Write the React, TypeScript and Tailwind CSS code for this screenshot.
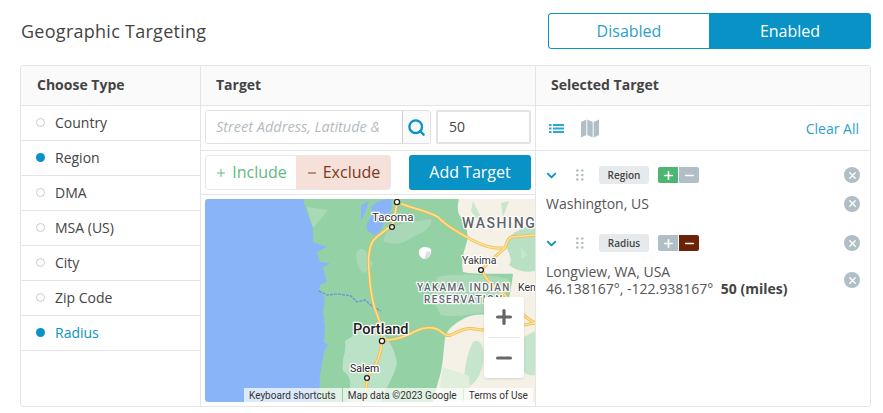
import React from 'react';
import { ChevronDown, Minus, Plus, Search, X } from 'lucide-react';

const TYPES = ['Country', 'Region', 'DMA', 'MSA (US)', 'City', 'Zip Code', 'Radius'];

const I5 = 'M193 0 L188 24 C182 32 172 36 168 42 C163 50 163 60 164 72 C165 88 166 98 170 110 C174 120 177 128 177 143 C176 154 172 166 164 176 C161 182 162 190 158 203';
const I90 = 'M197 5 C210 10 222 12 233 18 C240 26 248 30 258 36 C268 42 280 48 290 49 L300 49 C302 44 302 40 306 38 L330 36';
const I82 = 'M300 49 C290 58 282 64 277 71 C280 82 292 88 300 96 C308 106 318 118 330 124';
const I84 = 'M177 141 C190 142 204 136 213 131 C220 128 226 128 232 130 C238 133 240 138 246 136 C254 132 262 128 270 130 C282 133 306 128 330 124';

const RemoveButton = () => (
  <span className="flex h-4 w-4 items-center justify-center rounded-full bg-[#b0bec5] text-white">
    <X size={11} strokeWidth={3} />
  </span>
);

const GripDots = () => (
  <svg width="8" height="12" viewBox="0 0 8 12" fill="#b0bec5" className="ml-[17px]">
    <circle cx="1.3" cy="1.5" r="1.3" />
    <circle cx="6.3" cy="1.5" r="1.3" />
    <circle cx="1.3" cy="6" r="1.3" />
    <circle cx="6.3" cy="6" r="1.3" />
    <circle cx="1.3" cy="10.5" r="1.3" />
    <circle cx="6.3" cy="10.5" r="1.3" />
  </svg>
);

const TargetHead = ({ label, mode }: { label: string; mode: 'include' | 'exclude' }) => (
  <div className="flex h-[18px] items-center">
    <ChevronDown size={15} strokeWidth={3} className="-ml-[2px] text-[#0a93c5]" />
    <GripDots />
    <span className="ml-[15px] flex h-[18px] w-[50px] items-center justify-center rounded-[3px] bg-[#e7eaed] text-[10px] font-semibold text-[#444]">
      {label}
    </span>
    <div className="ml-[9px] flex h-4 gap-px">
      <span className={`flex w-5 items-center justify-center rounded-l-[2px] text-white ${mode === 'include' ? 'bg-[#4cb572]' : 'bg-[#b0bec5]'}`}>
        <Plus size={13} strokeWidth={3} />
      </span>
      <span className={`flex w-5 items-center justify-center rounded-r-[2px] text-white ${mode === 'exclude' ? 'bg-[#6b2206]' : 'bg-[#b0bec5]'}`}>
        <Minus size={13} strokeWidth={3} />
      </span>
    </div>
    <div className="ml-auto">
      <RemoveButton />
    </div>
  </div>
);

const MapArt = () => (
  <svg viewBox="0 0 330 203" className="block h-full w-full" preserveAspectRatio="none" fontFamily="Roboto, sans-serif">
    <rect width="330" height="203" fill="#8ab4f8" />
    {/* land */}
    <path d="M98 0 L102 13 L108 29 L108 43 L122 48 L112 53 L115 63 L125 64 L118 69 L122 83 L115 86 L114 91 L120 99 L118 113 L120 129 L119 143 L123 146 L119 153 L115 176 L114 203 L330 203 L330 0 Z" fill="#94d2a5" />
    <path d="M102 8 L123 11 L108 29 Z" fill="#a8dab5" />
    {/* eastern dry side */}
    <path d="M254 0 C252 8 252 14 257 20 C262 28 264 36 261 46 C258 54 256 64 258 73 C272 76 296 74 308 75 C306 90 304 104 298 114 C284 116 268 114 260 119 C250 124 242 130 240 139 C238 155 238 170 233 183 L228 203 L330 203 L330 0 Z" fill="#f5f1e6" />
    <path d="M302 40 C312 30 322 28 330 24 L330 72 C320 74 312 72 304 66 C310 58 298 50 302 40 Z" fill="#b9e0c3" />
    <path d="M268 2 C272 10 274 16 280 22 C276 24 270 18 266 12 Z M296 4 L304 2 L298 18 Z M316 48 L322 56 L316 60 Z" fill="#c8e6cd" />
    <path d="M268 143 C276 138 280 150 278 164 C276 176 270 186 262 188 C256 180 262 154 268 143 Z M308 146 C318 138 330 132 330 132 L330 176 C322 178 312 172 308 146 Z" fill="#c5e6cc" />
    <path d="M238 168 L264 177 L266 200 L236 203 C234 192 236 180 238 168 Z" fill="#e0efdc" />
    {/* reservation and valleys */}
    <path d="M232 78 C250 74 288 76 304 80 C302 96 298 110 290 114 C272 112 250 120 236 116 C228 106 230 90 232 78 Z" fill="#abd9b8" />
    <path d="M140 142 C150 136 160 128 172 128 C182 136 190 150 192 164 C190 176 180 190 176 203 L142 203 C144 190 150 180 138 172 C136 160 142 152 140 142 Z" fill="#bbe2c6" />
    <path d="M186 28 C198 24 214 22 226 20 C228 28 218 34 204 40 C196 46 186 46 178 42 C180 36 182 32 186 28 Z" fill="#a9d8b6" />
    <path d="M152 52 C160 46 162 54 164 62 C172 60 166 72 158 74 C152 68 150 60 152 52 Z" fill="#a9d8b6" />
    {/* puget sound */}
    <path d="M156 6 L164 2 L160 14 L156 22 Z M166 8 C172 2 178 0 186 0 C188 8 186 14 180 20 C178 26 176 34 170 36 C164 34 160 30 162 24 C166 20 168 14 166 8 Z" fill="#8ab4f8" />
    <path d="M214 52 C215 47 222 47 226 50 C227 55 224 60 219 60 C216 59 213 56 214 52 Z" fill="#ffffff" />
    <path d="M222 52 L226 54 L223 59 L219 60 Z" fill="#dedede" />
    {/* columbia river */}
    <path d="M114 92 L122 96 L134 95 L146 97 L152 103 L160 101 L167 107 L176 112" fill="none" stroke="#6d94dc" strokeWidth="1.4" strokeDasharray="3 1" />
    <g fill="none" strokeLinejoin="round" strokeLinecap="round">
      <g stroke="#f2b94f" strokeWidth="3">
        <path d={I5} />
        <path d={I90} />
        <path d={I82} />
        <path d={I84} />
      </g>
      <g stroke="#fde293" strokeWidth="1.5">
        <path d={I5} />
        <path d={I90} />
        <path d={I82} />
        <path d={I84} />
      </g>
    </g>
    <g fill="#fff" stroke="#222" strokeWidth="1.3">
      <circle cx="192" cy="3" r="2.6" />
      <circle cx="187" cy="28" r="2.4" />
      <circle cx="276" cy="71" r="2.4" />
      <circle cx="177" cy="142" r="2.6" />
      <circle cx="162" cy="179" r="2.4" />
    </g>
    <g stroke="#fff" strokeWidth="2.5" paintOrder="stroke" strokeLinejoin="round">
      <text x="167" y="22" fontSize="11.5" fill="#333">Tacoma</text>
      <text x="257" y="29" fontSize="14" letterSpacing="1.6" fill="#5f6368" fontWeight="500">WASHING</text>
      <text x="257" y="65" fontSize="10.5" fill="#333">Yakima</text>
      <text x="212" y="91.5" fontSize="10" letterSpacing="1.35" fill="#5f6368" fontWeight="500">YAKAMA INDIAN</text>
      <text x="219" y="103.5" fontSize="10" letterSpacing="1.35" fill="#5f6368" fontWeight="500">RESERVATION</text>
      <text x="313" y="92" fontSize="10.5" fill="#333">Ken</text>
      <text x="148" y="135" fontSize="14.5" fill="#222" fontWeight="500">Portland</text>
      <text x="145" y="173" fontSize="10.5" fill="#222">Salem</text>
    </g>
  </svg>
);

const App: React.FC = () => {
  return (
    <div className="h-[413px] w-[883px] overflow-hidden bg-white font-['Open_Sans',sans-serif] text-[#444]">
      {/* Title row */}
      <div className="flex h-[65px] items-start pl-[21px] pr-3 pt-[13px]">
        <h1 className="mt-[6px] text-[18px] font-medium leading-6 tracking-[0.27px] text-[#444]">Geographic Targeting</h1>
        <div className="ml-auto flex h-9 w-[323px] overflow-hidden rounded-[3px] text-[16px]">
          <button className="flex-1 rounded-l-[3px] border border-r-0 border-[#0a93c5] bg-white text-[#2a9fcb]">Disabled</button>
          <button className="w-[162px] bg-[#0892c5] text-white">Enabled</button>
        </div>
      </div>

      {/* Main panel */}
      <div className="mx-5 flex h-[342px] w-[851px] overflow-hidden rounded-[3px] border border-[#e5e5e5]">
        {/* Choose type */}
        <div className="w-[180px] shrink-0 border-r border-[#e5e5e5]">
          <div className="flex h-10 items-center border-b border-[#e5e5e5] bg-[#fafafa] pb-[2px] pl-4 text-[14px] font-bold text-[#444]">Choose Type</div>
          {TYPES.map((t, i) => {
            const active = t === 'Region' || t === 'Radius';
            return (
              <div key={t} className="flex h-[35px] items-center border-b border-[#e5e5e5] pb-[2px] pl-[15px] text-[14px]">
                <span className={`h-[9px] w-[9px] rounded-full ${active ? 'bg-[#0892c5]' : 'border border-[#ccc] bg-white'}`} />
                <span className={`ml-[10px] ${i === 6 ? 'text-[#0a93c5]' : 'text-[#444]'}`}>{t}</span>
              </div>
            );
          })}
        </div>

        {/* Target */}
        <div className="w-[335px] shrink-0 border-r border-[#e5e5e5]">
          <div className="flex h-10 items-center border-b border-[#e5e5e5] bg-[#fafafa] pb-[2px] pl-[15px] text-[14px] font-bold text-[#444]">Target</div>
          <div className="flex h-[45px] items-start border-b border-[#e5e5e5] pl-1 pt-1">
            <div className="flex h-[34px] w-[226px] overflow-hidden rounded-[3px] border border-[#e0e0e0]">
              <input
                readOnly
                placeholder="Street Address, Latitude & Longitude"
                className="w-[196px] min-w-0 shrink-0 bg-white pl-[10px] pr-[23px] text-[14.5px] italic outline-none placeholder:text-[#b3bcc1]"
              />
              <button className="flex flex-1 items-center justify-center border-l border-[#cfcfcf] bg-[#fafafa] text-[#0a93c5]">
                <Search size={19} strokeWidth={3} />
              </button>
            </div>
            <div className="ml-[5px] h-[34px] w-[95px] rounded-[2px] border-2 border-[#e3e3e3] pl-[11px] text-[14px] leading-[30px] text-[#444]">50</div>
          </div>
          <div className="flex h-11 items-start border-b border-[#e5e5e5] pl-1 pt-1">
            <div className="flex h-[35px] w-[186px] overflow-hidden rounded-[3px] border border-[#e8e8e8] text-[16px]">
              <span className="flex w-[90px] items-center justify-center gap-[5px] bg-white text-[#5dbb82]">
                <Plus size={12} strokeWidth={2} />
                <span className="-mt-[2px]">Include</span>
              </span>
              <span className="flex flex-1 items-center justify-center gap-[5px] bg-[#f5e1d9] text-[#7b3a20]">
                <Minus size={12} strokeWidth={2.4} />
                <span className="-mt-[2px]">Exclude</span>
              </span>
            </div>
            <button className="ml-[18px] h-[35px] w-[122px] rounded-[3px] bg-[#0892c5] pb-[2px] text-[16px] text-white">Add Target</button>
          </div>
          <div className="relative ml-1 mt-1 h-[203px] w-[330px] overflow-hidden rounded-l-[3px]">
            <MapArt />
            <div className="absolute left-[279px] top-[98px] flex h-[81px] w-10 flex-col items-center rounded-[2px] bg-white text-[#666] shadow-sm">
              <div className="flex h-10 w-full items-center justify-center"><Plus size={22} strokeWidth={3.5} /></div>
              <div className="h-px w-[30px] bg-[#e6e6e6]" />
              <div className="flex h-10 w-full items-center justify-center"><Minus size={22} strokeWidth={3.5} /></div>
            </div>
            <div className="absolute bottom-0 left-[39px] flex h-[14px] items-center gap-px whitespace-nowrap font-['Roboto',sans-serif] text-[10px] text-[#333]">
              <span className="flex h-full items-center bg-white/70 pl-[5px] pr-[6px]">Keyboard shortcuts</span>
              <span className="flex h-full items-center bg-white/70 pl-[5px] pr-[6px]">Map data ©2023 Google</span>
              <span className="flex h-full items-center bg-white/80 px-[5px]">Terms of Use</span>
            </div>
          </div>
        </div>

        {/* Selected target */}
        <div className="min-w-0 flex-1">
          <div className="flex h-10 items-center border-b border-[#e5e5e5] bg-[#fafafa] pb-[2px] pl-[15px] text-[14px] font-bold text-[#444]">Selected Target</div>
          <div className="flex h-[45px] items-center border-b border-[#e5e5e5] pl-[13px] pr-[11px]">
            <svg width="15" height="9" viewBox="0 0 15 9" fill="#2ba6d6">
              <rect x="0" y="0" width="2.5" height="2" />
              <rect x="4" y="0" width="11" height="2" />
              <rect x="0" y="3.5" width="2.5" height="2" />
              <rect x="4" y="3.5" width="11" height="2" />
              <rect x="0" y="7" width="2.5" height="2" />
              <rect x="4" y="7" width="11" height="2" />
            </svg>
            <svg width="18" height="19" viewBox="0 0 18 19" fill="#b0bec5" className="ml-[17px]">
              <path d="M0 3 L5.3 0.5 L5.3 16 L0 18.5 Z" />
              <path d="M6.3 0.5 L11.7 3 L11.7 18.5 L6.3 16 Z" />
              <path d="M12.7 3 L18 0.5 L18 16 L12.7 18.5 Z" />
            </svg>
            <span className="ml-auto text-[14px] text-[#2a9fcb]">Clear All</span>
          </div>
          <div className="px-[10px] pt-[15px]">
            <TargetHead label="Region" mode="include" />
            <div className="mt-[10px] flex items-center justify-between text-[14px] leading-[19px] text-[#555]">
              <span>Washington, US</span>
              <RemoveButton />
            </div>
            <div className="mt-[21px]">
              <TargetHead label="Radius" mode="exclude" />
            </div>
            <div className="mt-[11px] flex items-center justify-between text-[14px] leading-[17px] text-[#555]">
              <div>
                <div>Longview, WA, USA</div>
                <div>46.138167°, -122.938167° <span className="ml-1 font-bold text-[#444]">50 (miles)</span></div>
              </div>
              <RemoveButton />
            </div>
          </div>
        </div>
      </div>
    </div>
  );
};

export default App;
